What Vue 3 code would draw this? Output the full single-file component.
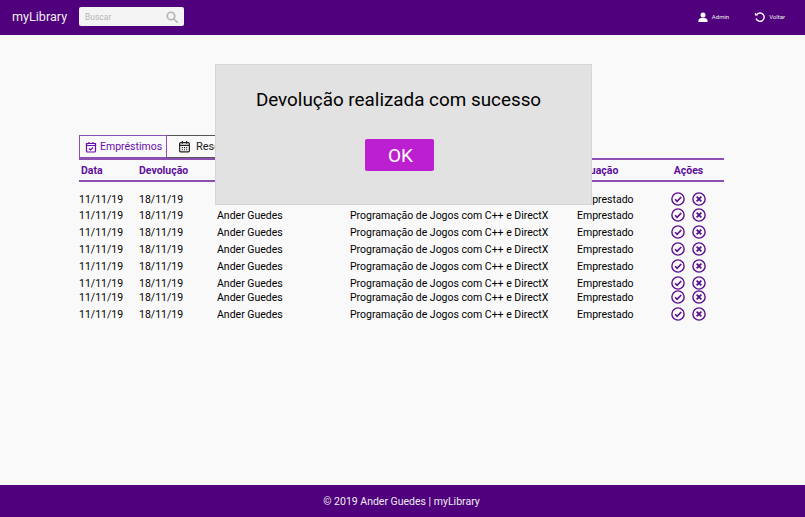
<template>
  <div class="page">
    <header class="topbar">
      <div class="brand">myLibrary</div>
      <div class="search">
        <span>Buscar</span>
        <svg width="12" height="12" viewBox="0 0 24 24" fill="none" stroke="#b5b5b5" stroke-width="3.4">
          <circle cx="10" cy="10" r="7.5" />
          <path d="M15.5 15.5 22.5 22.5" stroke-linecap="round" />
        </svg>
      </div>
      <nav class="top-links">
        <a class="top-link">
          <svg width="10" height="10" viewBox="0 0 24 24" fill="#fff">
            <circle cx="12" cy="7" r="6" />
            <path d="M1 24v-3c0-4.500 5-7 11-7s11 2.500 11 7v3z" />
          </svg>
          <span>Admin</span>
        </a>
        <a class="top-link">
          <svg width="11" height="11" viewBox="0 0 24 24" fill="none" stroke="#fff" stroke-width="3">
            <path d="M6 8a9 9 0 1 1-1.500 8" />
            <path d="M2 3v7h7" fill="#fff" stroke="none" />
          </svg>
          <span>Voltar</span>
        </a>
      </nav>
    </header>

    <main class="content">
      <div class="tabs">
        <button class="tab active">
          <svg width="12" height="12" viewBox="0 0 24 24" fill="none" stroke="#6a0dad" stroke-width="2.400">
            <rect x="3" y="5" width="18" height="17" rx="2" />
            <path d="M3 5h18v4H3zM8 2v4M16 2v4M8 15l3 3 5-5" />
          </svg>
          <span>Empréstimos</span>
        </button>
        <button class="tab">
          <svg width="13" height="13" viewBox="0 0 24 24" fill="none" stroke="#222" stroke-width="2.200">
            <rect x="3" y="5" width="18" height="17" rx="2" />
            <path d="M3 10h18M8 2v5M16 2v5M7 14h2M11 14h2M15 14h2M7 18h2M11 18h2M15 18h2" />
          </svg>
          <span>Reservas</span>
        </button>
      </div>

      <div class="row head">
        <div class="pad">Data</div>
        <div>Devolução</div>
        <div>Aluno</div>
        <div>Livro</div>
        <div>Situação</div>
        <div class="center">Ações</div>
      </div>

      <div class="rows">
        <div v-for="(shift, i) in rowShifts" :key="i" class="row item" :style="{ marginTop: shift + 'px' }">
          <div>11/11/19</div>
          <div>18/11/19</div>
          <div>Ander Guedes</div>
          <div>Programação de Jogos com C++ e DirectX</div>
          <div>Emprestado</div>
          <div class="actions">
            <svg width="14" height="14" viewBox="0 0 24 24" fill="none" stroke="#5b0f8c" stroke-width="2.400">
              <circle cx="12" cy="12" r="10.500" />
              <path d="M7 12.500l3.500 3.500 7-7.500" stroke-width="2.800" />
            </svg>
            <svg width="14" height="14" viewBox="0 0 24 24" fill="none" stroke="#5b0f8c" stroke-width="2.400">
              <circle cx="12" cy="12" r="10.500" />
              <path d="M8 8l8 8M16 8l-8 8" stroke-width="3.200" />
            </svg>
          </div>
        </div>
      </div>
    </main>

    <footer class="footer">© 2019 Ander Guedes | myLibrary</footer>

    <div class="dialog">
      <p>Devolução realizada com sucesso</p>
      <button class="ok">OK</button>
    </div>
  </div>
</template>

<script setup>
// the rows in the mockup are not evenly spaced
const rowShifts = [0, -1, 0, 0, 0, 0, -3, 0]
</script>

<style>
html, body {
  margin: 0;
  background: #f9f9fa;
}
</style>

<style scoped>
.page {
  position: relative;
  display: flex;
  flex-direction: column;
  width: 805px;
  height: 517px;
  overflow: hidden;
  background: #f9f9fa;
  font-family: Roboto, "Liberation Sans", sans-serif;
  color: #111;
}

.topbar {
  display: flex;
  align-items: center;
  height: 35px;
  flex: none;
  box-sizing: border-box;
  padding: 0 20px 2px 12px;
  background: #50007d;
  color: #fff;
}

.brand {
  font-size: 12.600px;
  color: #eee;
  width: 67px;
}

.search {
  display: flex;
  align-items: center;
  justify-content: space-between;
  box-sizing: border-box;
  width: 105px;
  height: 19px;
  padding: 0 6px;
  background: #f4f4f4;
  border-radius: 2px;
  font-size: 8.500px;
  color: #b5b5b5;
}

.top-links {
  display: flex;
  gap: 25px;
  margin-left: auto;
}

.top-link {
  display: flex;
  align-items: center;
  gap: 4px;
  font-size: 6px;
  color: #eee;
}

.content {
  flex: 1;
  padding: 100px 81px 0 79px;
}

.tabs {
  display: flex;
  height: 23px;
}

.tab {
  display: flex;
  align-items: center;
  gap: 5px;
  box-sizing: border-box;
  width: 88px;
  padding: 0 0 0 5px;
  background: #f9f9fa;
  border: 1px solid #555;
  font: inherit;
  font-size: 11px;
  color: #222;
}

.tab:last-child {
  width: 100px;
  padding-left: 11px;
  border-left: none;
}

.tab.active {
  gap: 3px;
  border-color: #8e4fb5;
  font-size: 10.500px;
  color: #6a0dad;
}

.row {
  display: grid;
  grid-template-columns: 60px 78px 133px 227px 94px 35px;
  align-items: center;
  font-size: 10.500px;
  line-height: 14px;
}

.item {
  height: 17px;
  color: #000;
}

.head {
  height: 19px;
  padding-top: 1px;
  border-top: 2px solid #8e4fb5;
  border-bottom: 2px solid #8e4fb5;
  font-weight: 700;
  color: #5f0f9a;
}

.pad {
  padding-left: 2px;
}

.center {
  text-align: center;
}

.rows {
  padding-top: 9px;
}

.actions {
  display: flex;
  gap: 7px;
  margin-bottom: 1px;
}

.footer {
  display: flex;
  align-items: center;
  justify-content: center;
  height: 32px;
  flex: none;
  box-sizing: border-box;
  padding-right: 2px;
  background: #50007d;
  font-size: 10.500px;
  color: #eee;
}

.dialog {
  position: absolute;
  top: 64px;
  left: 215px;
  box-sizing: border-box;
  width: 377px;
  height: 141px;
  padding: 24px 10px 0 0;
  background: #e2e2e2;
  border: 1px solid #d6d6d6;
  text-align: center;
}

.dialog p {
  margin: 0;
  font-size: 18.850px;
  line-height: 22px;
  color: #000;
}

.ok {
  display: block;
  width: 69px;
  height: 32px;
  margin: 28px 0 0 149px;
  padding: 0 0 0 2px;
  background: #bb1fd0;
  border: none;
  border-radius: 2px;
  font: inherit;
  font-size: 19px;
  color: #fff;
}
</style>
